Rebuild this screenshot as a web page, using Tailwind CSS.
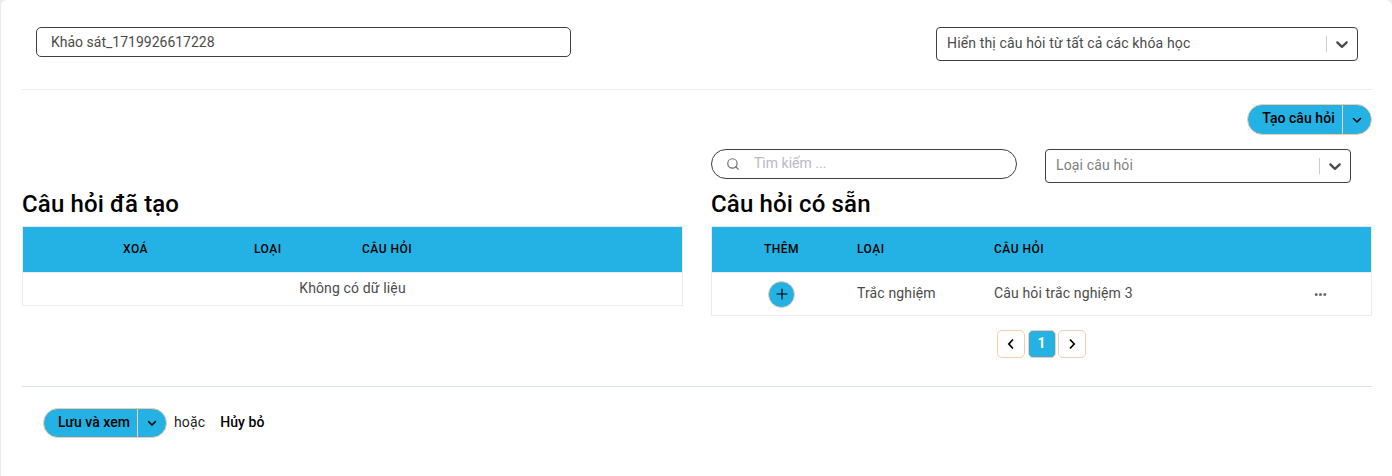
<!DOCTYPE html>
<html lang="vi">
<head>
<meta charset="utf-8">
<title>Khảo sát</title>
<script src="https://cdn.jsdelivr.net/npm/@tailwindcss/browser@4"></script>
</head>
<body class="bg-[#ebebeb] pl-px font-['Roboto','Noto_Sans',sans-serif] text-[14px] leading-[20px] tracking-[0.14px] text-[#4b4b4b]">
<main class="flex h-[476px] flex-col overflow-hidden rounded-t-[6px] bg-white pl-[21px] pr-5">
  <header class="flex h-[90px] shrink-0 items-start justify-between border-b border-[#ebe9f1] pt-[27px] pr-[14px] pl-[14px]">
    <input type="text" value="Khảo sát_1719926617228" class="h-[30px] w-[535px] rounded-[5px] border border-[#404040] px-[14px] tracking-normal outline-none">
    <div class="flex h-[34px] w-[422px] items-center rounded-[4px] border border-[#404040] pl-[10px]">
      <span class="grow pb-[2px]">Hiển thị câu hỏi từ tất cả các khóa học</span>
      <span class="h-4 w-px bg-[#cccccc]"></span>
      <svg class="mx-[5px] size-5 fill-[#4b4b4b]" viewBox="0 0 20 20"><path d="M4.516 7.548c0.436-0.446 1.043-0.481 1.576 0l3.908 3.747 3.908-3.747c0.533-0.481 1.141-0.446 1.574 0 0.436 0.445 0.408 1.197 0 1.615-0.406 0.418-4.695 4.502-4.695 4.502-0.217 0.223-0.502 0.335-0.787 0.335s-0.57-0.112-0.789-0.335c0 0-4.287-4.084-4.695-4.502s-0.436-1.17 0-1.615z"/></svg>
    </div>
  </header>

  <div class="mt-[14px] flex justify-end">
    <div class="flex h-[31px] w-[125px] overflow-hidden rounded-full border border-[#fbcbaa] bg-[#23b2e3] font-medium text-black">
      <button class="w-[94px] pb-[3px] pl-[7px] tracking-[0.05px]">Tạo câu hỏi</button>
      <button class="flex grow items-center justify-center border-l border-[#fbcbaa]"><svg class="size-3" viewBox="0 0 24 24" fill="none" stroke="currentColor" stroke-width="3" stroke-linecap="round" stroke-linejoin="round"><path d="M5 9l7 7 7-7"/></svg></button>
    </div>
  </div>

  <div class="mt-[14px] flex justify-end gap-7 pr-[21px]">
    <div class="flex h-[30px] w-[306px] items-center rounded-full border border-[#404040] pl-[14px]">
      <svg class="size-[14px] text-[#6e6b7b]" viewBox="0 0 24 24" fill="none" stroke="currentColor" stroke-width="2" stroke-linecap="round" stroke-linejoin="round"><circle cx="11" cy="11" r="8"/><path d="M21 21l-4.35-4.35"/></svg>
      <span class="pb-[2px] pl-[14px] tracking-normal text-[#b9b9c3]">Tìm kiếm ...</span>
    </div>
    <div class="flex h-[34px] w-[306px] items-center rounded-[4px] border border-[#404040] pl-[10px]">
      <span class="grow pb-[2px] text-[#808080]">Loại câu hỏi</span>
      <span class="h-4 w-px bg-[#cccccc]"></span>
      <svg class="mx-[5px] size-5 fill-[#4b4b4b]" viewBox="0 0 20 20"><path d="M4.516 7.548c0.436-0.446 1.043-0.481 1.576 0l3.908 3.747 3.908-3.747c0.533-0.481 1.141-0.446 1.574 0 0.436 0.445 0.408 1.197 0 1.615-0.406 0.418-4.695 4.502-4.695 4.502-0.217 0.223-0.502 0.335-0.787 0.335s-0.57-0.112-0.789-0.335c0 0-4.287-4.084-4.695-4.502s-0.436-1.17 0-1.615z"/></svg>
    </div>
  </div>

  <div class="mt-[7px] grid h-[196px] shrink-0 grid-cols-2 gap-7">
    <section>
      <h2 class="h-[36px] text-[24px] leading-[28px] font-medium tracking-[0.14px] text-black">Câu hỏi đã tạo</h2>
      <div class="border border-[#ebe9f1]">
        <div class="grid h-[46px] grid-cols-[180px_159px_1fr] items-center border-b border-[#ebe9f1] bg-[#23b2e3] pb-[2px] text-[12px] font-medium tracking-[0.5px] text-black">
          <span class="pl-[100px]">XOÁ</span><span class="pl-[51px]">LOẠI</span><span>CÂU HỎI</span>
        </div>
        <div class="h-[32px] pt-[5px] text-center">Không có dữ liệu</div>
      </div>
    </section>
    <section>
      <h2 class="h-[36px] text-[24px] leading-[28px] font-medium tracking-[0.14px] text-black">Câu hỏi có sẵn</h2>
      <div class="border border-[#ebe9f1]">
        <div class="grid h-[46px] grid-cols-[145px_137px_1fr] items-center border-b border-[#ebe9f1] bg-[#23b2e3] pb-[2px] text-[12px] font-medium tracking-[0.5px] text-black">
          <span class="pl-[52px]">THÊM</span><span>LOẠI</span><span>CÂU HỎI</span>
        </div>
        <div class="grid h-[42px] grid-cols-[145px_137px_1fr_58px] items-center">
          <button class="ml-[56px] flex size-[27px] items-center justify-center rounded-full border border-[#fbcbaa] bg-[#23b2e3] text-black"><svg class="size-[14px]" viewBox="0 0 14 14" fill="none" stroke="currentColor" stroke-width="1.2" stroke-linecap="round"><path d="M7 2v10M2 7h10"/></svg></button>
          <span class="pb-[2px]">Trắc nghiệm</span>
          <span class="pb-[2px]">Câu hỏi trắc nghiệm 3</span>
          <svg class="h-4 w-[14px] fill-[#6e6b7b]" viewBox="0 0 14 16"><circle cx="3.2" cy="8.5" r="1.5"/><circle cx="7.5" cy="8.5" r="1.5"/><circle cx="11.8" cy="8.5" r="1.5"/></svg>
        </div>
      </div>
      <nav class="mt-[14px] flex justify-center gap-[2.5px] text-black">
        <button class="flex size-7 items-center justify-center rounded-[5px] border border-[#fbcbaa]"><svg class="size-[14px]" viewBox="0 0 14 14" fill="none" stroke="currentColor" stroke-width="1.7"><path d="M9 2.5L4.8 7 9 11.5"/></svg></button>
        <button class="flex size-7 items-center justify-center rounded-[5px] border border-[#fbcbaa] bg-[#23b2e3] pb-[2px] font-bold text-white">1</button>
        <button class="flex size-7 items-center justify-center rounded-[5px] border border-[#fbcbaa]"><svg class="size-[14px]" viewBox="0 0 14 14" fill="none" stroke="currentColor" stroke-width="1.7"><path d="M5 2.5L9.2 7 5 11.5"/></svg></button>
      </nav>
    </section>
  </div>

  <footer class="flex items-start border-t border-[#dae1e7] pt-[21px] pl-[21px] text-black">
    <div class="flex h-[30px] w-[124px] overflow-hidden rounded-full border border-[#fbcbaa] bg-[#23b2e3] font-medium">
      <button class="w-[93px] pb-[2px] pl-[7px] tracking-[0.05px]">Lưu và xem</button>
      <button class="flex grow items-center justify-center border-l border-[#fbcbaa]"><svg class="size-3" viewBox="0 0 24 24" fill="none" stroke="currentColor" stroke-width="3" stroke-linecap="round" stroke-linejoin="round"><path d="M5 9l7 7 7-7"/></svg></button>
    </div>
    <span class="pt-[4px] pl-[7px] text-[#222222]">hoặc</span>
    <button class="mt-[4px] ml-[15px] font-medium tracking-[0.05px]">Hủy bỏ</button>
  </footer>
</main>
</body>
</html>
